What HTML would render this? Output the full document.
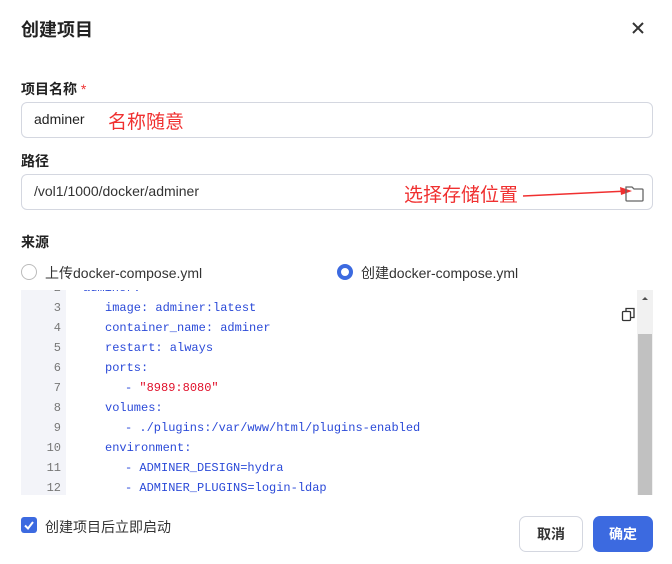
<!DOCTYPE html>
<html><head><meta charset="utf-8"><style>
body{margin:0;width:672px;height:564px;background:#fff;font-family:"Liberation Sans","Noto Sans CJK SC",sans-serif;position:relative;overflow:hidden;color:#222}
.a{position:absolute}
.inp{position:absolute;left:21px;width:630px;height:34px;border:1px solid #d4d7e0;border-radius:6px;background:#fff}
.lbl{position:absolute;left:21px;font-size:14px;font-weight:bold;color:#222}
.code{position:absolute;left:21px;top:290px;width:632px;height:205px;overflow:hidden;background:#fff}
.gut{position:absolute;left:0;top:0;width:45px;height:205px;background:#f3f4f9}
.ln{position:absolute;font-family:"Liberation Mono",monospace;font-size:12px;height:20px;line-height:20px}
.n{left:0;width:40px;text-align:right;color:#777}
.t{left:62px;color:#2b4ad8;white-space:pre}
</style></head><body>
<div class="a" style="left:21px;top:16px;font-size:18px;font-weight:bold">创建项目</div>
<svg class="a" style="left:631px;top:21px" width="14" height="14"><path d="M2 2L12 12M12 2L2 12" stroke="#333" stroke-width="2"/></svg>
<div class="lbl" style="top:79px">项目名称 <span style="color:#e33;font-weight:normal">*</span></div>
<div class="inp" style="top:102px"></div>
<div class="a" style="left:34px;top:111px;font-size:14px">adminer</div>
<div class="a" style="left:108px;top:107px;font-size:19px;color:#f03030">名称随意</div>
<div class="lbl" style="top:151px">路径</div>
<div class="inp" style="top:174px"></div>
<div class="a" style="left:34px;top:183px;font-size:14px;color:#333">/vol1/1000/docker/adminer</div>
<div class="a" style="left:404px;top:180px;font-size:19px;color:#f03030">选择存储位置</div>
<svg class="a" style="left:520px;top:180px" width="140" height="25"><path d="M3 16L108 11" stroke="#f03030" stroke-width="1.5"/><path d="M100 7L112 11L101 15Z" fill="#f03030"/><path d="M106 7h6l2 2h8a1 1 0 0 1 1 1v10a1 1 0 0 1-1 1h-15a1 1 0 0 1-1-1z" fill="none" stroke="#666" stroke-width="1.3"/></svg>
<div class="lbl" style="top:232px">来源</div>
<div class="a" style="left:21px;top:264px;width:14px;height:14px;border:1px solid #bbb;border-radius:50%"></div>
<div class="a" style="left:45px;top:263px;font-size:14px;color:#333">上传docker-compose.yml</div>
<div class="a" style="left:337px;top:264px;width:8px;height:8px;border:4px solid #3c6ae0;border-radius:50%"></div>
<div class="a" style="left:361px;top:263px;font-size:14px;color:#333">创建docker-compose.yml</div>
<div class="code"><div class="gut"></div>
<div class="ln n" style="top:-12px">2</div><div class="ln t" style="top:-12px;left:62px">adminer:</div>
<div class="ln n" style="top:8px">3</div><div class="ln t" style="top:8px;left:84px">image: adminer:latest</div>
<div class="ln n" style="top:28px">4</div><div class="ln t" style="top:28px;left:84px">container_name: adminer</div>
<div class="ln n" style="top:48px">5</div><div class="ln t" style="top:48px;left:84px">restart: always</div>
<div class="ln n" style="top:68px">6</div><div class="ln t" style="top:68px;left:84px">ports:</div>
<div class="ln n" style="top:88px">7</div><div class="ln t" style="top:88px;left:104px">- <span style="color:#e0102a">"8989:8080"</span></div>
<div class="ln n" style="top:108px">8</div><div class="ln t" style="top:108px;left:84px">volumes:</div>
<div class="ln n" style="top:128px">9</div><div class="ln t" style="top:128px;left:104px">- ./plugins:/var/www/html/plugins-enabled</div>
<div class="ln n" style="top:148px">10</div><div class="ln t" style="top:148px;left:84px">environment:</div>
<div class="ln n" style="top:168px">11</div><div class="ln t" style="top:168px;left:104px">- ADMINER_DESIGN=hydra</div>
<div class="ln n" style="top:188px">12</div><div class="ln t" style="top:188px;left:104px">- ADMINER_PLUGINS=login-ldap</div>
<div class="a" style="left:616px;top:0;width:16px;height:205px;background:#f1f1f1"></div>
<div class="a" style="left:617px;top:44px;width:14px;height:161px;background:#c1c1c1"></div>
<svg class="a" style="left:618px;top:4px" width="12" height="8"><path d="M3 6L6 3L9 6Z" fill="#505050"/></svg>
<svg class="a" style="left:600px;top:16px" width="16" height="16"><rect x="1.5" y="5.5" width="8" height="9" rx="1" fill="#fff" stroke="#333" stroke-width="1.3"/><path d="M5 5V2.5h8v9h-3.5" fill="none" stroke="#333" stroke-width="1.3"/></svg>
</div>
<div class="a" style="left:21px;top:517px;width:16px;height:16px;background:#3c6ae0;border-radius:3px"></div>
<svg class="a" style="left:21px;top:517px" width="16" height="16"><path d="M4 8.5L7 11.5L12 5" stroke="#fff" stroke-width="2" fill="none"/></svg>
<div class="a" style="left:45px;top:517px;font-size:14px;color:#333">创建项目后立即启动</div>
<div class="a" style="left:519px;top:516px;width:62px;height:34px;border:1px solid #d4d7e0;border-radius:7px;text-align:center;line-height:34px;font-size:14px;font-weight:bold;color:#333">取消</div>
<div class="a" style="left:593px;top:516px;width:60px;height:36px;background:#3c6ae0;border-radius:7px;text-align:center;line-height:36px;font-size:14px;font-weight:bold;color:#fff">确定</div>
</body></html>
